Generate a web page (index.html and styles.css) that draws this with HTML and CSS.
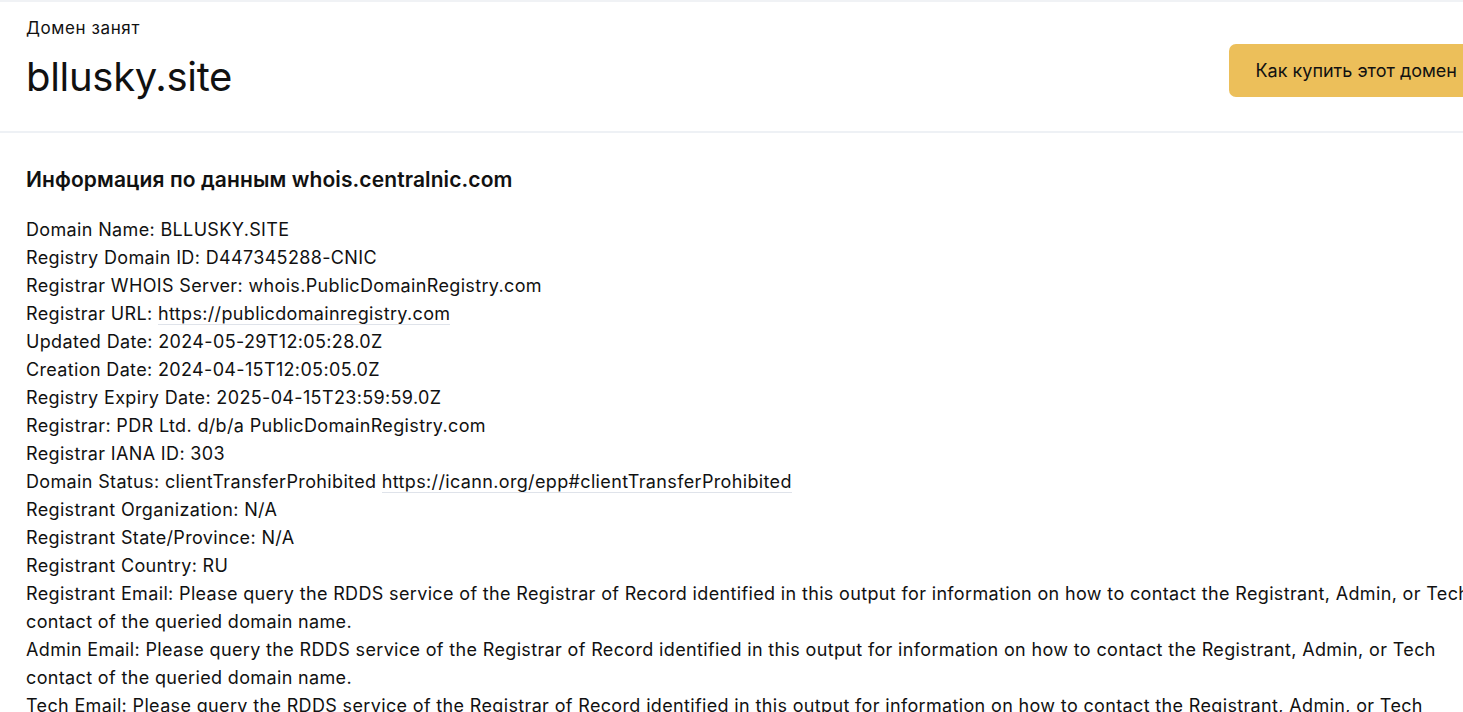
FILE: index.html
```html
<!DOCTYPE html>
<html lang="ru">
<head>
<meta charset="utf-8">
<title>bllusky.site</title>
<link rel="stylesheet" href="styles.css">
</head>
<body>
<div class="page">
  <header class="header">
    <div class="title-block">
      <div class="status">Домен занят</div>
      <h1 class="domain">bllusky.site</h1>
    </div>
    <a class="buy-btn" href="#">Как купить этот домен</a>
  </header>
  <main class="content">
    <h2 class="whois-title">Информация по данным whois.centralnic.com</h2>
    <div class="whois">
      <div class="row">Domain Name: BLLUSKY.SITE</div>
      <div class="row">Registry Domain ID: D447345288-CNIC</div>
      <div class="row">Registrar WHOIS Server: whois.PublicDomainRegistry.com</div>
      <div class="row">Registrar URL: <a class="link" href="#">https://publicdomainregistry.com</a></div>
      <div class="row">Updated Date: 2024-05-29T12:05:28.0Z</div>
      <div class="row">Creation Date: 2024-04-15T12:05:05.0Z</div>
      <div class="row">Registry Expiry Date: 2025-04-15T23:59:59.0Z</div>
      <div class="row">Registrar: PDR Ltd. d/b/a PublicDomainRegistry.com</div>
      <div class="row">Registrar IANA ID: 303</div>
      <div class="row">Domain Status: clientTransferProhibited <a class="link" href="#">https://icann.org/epp#clientTransferProhibited</a></div>
      <div class="row">Registrant Organization: N/A</div>
      <div class="row">Registrant State/Province: N/A</div>
      <div class="row">Registrant Country: RU</div>
      <div class="row">Registrant Email: Please query the RDDS service of the Registrar of Record identified in this output for information on how to contact the Registrant, Admin, or Tech contact of the queried domain name.</div>
      <div class="row">Admin Email: Please query the RDDS service of the Registrar of Record identified in this output for information on how to contact the Registrant, Admin, or Tech contact of the queried domain name.</div>
      <div class="row">Tech Email: Please query the RDDS service of the Registrar of Record identified in this output for information on how to contact the Registrant, Admin, or Tech contact of the queried domain name.</div>
    </div>
  </main>
</div>
</body>
</html>
```

FILE: styles.css
```css
html, body {
  margin: 0;
  padding: 0;
  overflow: hidden;
  background: #fff;
}
body {
  font-family: Inter, "Noto Sans", sans-serif;
  color: #111;
}
.page {
  width: 1500px;
  border-top: 2px solid #f0f2f5;
}
.header {
  display: flex;
  justify-content: space-between;
  align-items: flex-start;
  padding: 0 26px;
  height: 129px;
  border-bottom: 2px solid #eef1f5;
}
.title-block {
  display: flex;
  flex-direction: column;
}
.status {
  margin-top: 15px;
  font-size: 17px;
  line-height: 22px;
  letter-spacing: 0.6px;
}
.domain {
  margin: 15px 0 0;
  font-size: 40px;
  font-weight: 400;
  line-height: 46px;
  letter-spacing: -0.3px;
}
.buy-btn {
  margin-top: 42px;
  margin-right: -10px;
  display: flex;
  align-items: center;
  height: 53px;
  padding: 0 27px;
  background: #ecbf5a;
  border-radius: 7px;
  color: #111;
  font-size: 18px;
  text-decoration: none;
}
.content {
  padding: 34px 26px 0;
}
.whois-title {
  margin: 0 0 23px;
  font-size: 21px;
  line-height: 26px;
  font-weight: 600;
  letter-spacing: 0.1px;
}
.whois {
  width: 1455px;
  font-size: 18px;
  line-height: 28px;
  letter-spacing: 0.35px;
}
.link {
  color: inherit;
  text-decoration: none;
  border-bottom: 1px solid #dfe3ea;
}
```
